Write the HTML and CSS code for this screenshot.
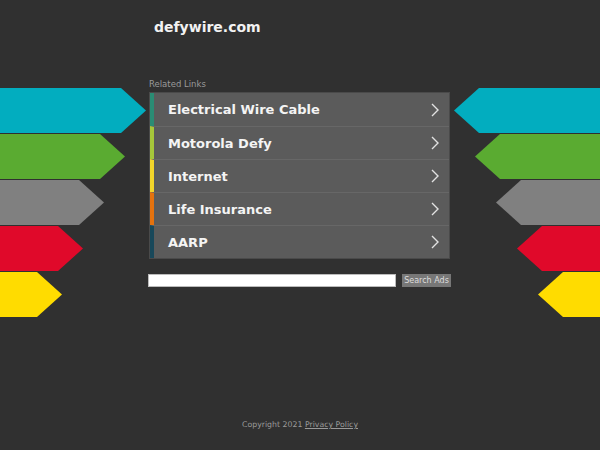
FILE: index.html
```html
<!DOCTYPE html>
<html lang="en">

<head>
    <meta charset="UTF-8">
    <meta name="viewport" content="width=device-width, initial-scale=1.0">
    <title>defywire.com</title>
    <link rel="stylesheet" href="styles.css">
</head>

<body>
    <div class="page">
        <div class="stage">
            <div class="arrows arrows-left">
                <div class="arrow cyan w1"></div>
                <div class="arrow green w2"></div>
                <div class="arrow gray w3"></div>
                <div class="arrow red w4"></div>
                <div class="arrow yellow w5"></div>
            </div>

            <div class="center">
                <h1 class="domain">defywire.com</h1>
                <p class="label">Related Links</p>
                <ul class="links">
                    <li class="bar-teal"><span>Electrical Wire Cable</span>
                        <svg class="chev" viewBox="0 0 8 14"><path d="M1 1 L7 7 L1 13" /></svg></li>
                    <li class="bar-lime"><span>Motorola Defy</span>
                        <svg class="chev" viewBox="0 0 8 14"><path d="M1 1 L7 7 L1 13" /></svg></li>
                    <li class="bar-yellow"><span>Internet</span>
                        <svg class="chev" viewBox="0 0 8 14"><path d="M1 1 L7 7 L1 13" /></svg></li>
                    <li class="bar-orange"><span>Life Insurance</span>
                        <svg class="chev" viewBox="0 0 8 14"><path d="M1 1 L7 7 L1 13" /></svg></li>
                    <li class="bar-navy"><span>AARP</span>
                        <svg class="chev" viewBox="0 0 8 14"><path d="M1 1 L7 7 L1 13" /></svg></li>
                </ul>
                <div class="searchBox">
                    <input type="text" id="searchInput">
                    <button id="searchBtn">Search Ads</button>
                </div>
            </div>

            <div class="arrows arrows-right">
                <div class="arrow cyan w1"></div>
                <div class="arrow green w2"></div>
                <div class="arrow gray w3"></div>
                <div class="arrow red w4"></div>
                <div class="arrow yellow w5"></div>
            </div>
        </div>

        <div class="footer">Copyright 2021 <a href="#">Privacy Policy</a></div>
    </div>
</body>

</html>
```

FILE: styles.css
```css
* {
    margin: 0;
    padding: 0;
    box-sizing: border-box;
}

body {
    background-color: #303030;
    font-family: "DejaVu Sans", sans-serif;
    color: #fff;
}

.page {
    height: 450px;
    display: flex;
    flex-direction: column;
}

.stage {
    display: grid;
    grid-template-columns: 148px 304px 148px;
}

/* side arrows */
.arrows {
    padding-top: 88px;
    display: flex;
    flex-direction: column;
    gap: 1px;
}

.arrows-right {
    align-items: flex-end;
}

.arrow {
    height: 45px;
}

.arrows-left .arrow {
    clip-path: polygon(0 0, calc(100% - 25px) 0, 100% 50%, calc(100% - 25px) 100%, 0 100%);
}

.arrows-right .arrow {
    clip-path: polygon(25px 0, 100% 0, 100% 100%, 25px 100%, 0 50%);
}

.w1 { width: 146px; }
.w2 { width: 125px; }
.w3 { width: 104px; }
.w4 { width: 83px; }
.w5 { width: 62px; }

.cyan { background-color: #02adbf; }
.green { background-color: #5aab31; }
.gray { background-color: #808080; }
.red { background-color: #e0092a; }
.yellow { background-color: #ffdc00; }

/* center column */
.domain {
    font-size: 14px;
    font-weight: bold;
    line-height: 20px;
    padding: 17px 0 0 6px;
    color: #f2f2f2;
}

.label {
    font-size: 8.5px;
    line-height: 12px;
    color: #9a9a9a;
    margin: 41px 0 2px 1px;
}

.links {
    list-style: none;
    margin-left: 1px;
    width: 301px;
    border: 1px solid #4a4a4a;
    background-color: #5b5b5b;
}

.links li {
    height: 33px;
    display: flex;
    align-items: center;
    justify-content: space-between;
    padding: 0 10px 0 14px;
    border-left: 4px solid;
    font-size: 13px;
    font-weight: bold;
    color: #f4f4f4;
}

.links li + li {
    border-top: 1px solid #676767;
}

.bar-teal { border-left-color: #2a8c74 !important; }
.bar-lime { border-left-color: #a6c73a !important; }
.bar-yellow { border-left-color: #f2d52a !important; }
.bar-orange { border-left-color: #e4720e !important; }
.bar-navy { border-left-color: #18485a !important; }

.chev {
    width: 8px;
    height: 14px;
    fill: none;
    stroke: #e2e2e2;
    stroke-width: 1.4;
}

.searchBox {
    display: flex;
    gap: 6px;
    margin-top: 15px;
}

#searchInput {
    width: 248px;
    height: 13px;
    border: 1px solid #bbb;
    background-color: #fff;
}

#searchBtn {
    width: 49px;
    height: 13px;
    border: none;
    background-color: #777;
    color: #ddd;
    font-family: "DejaVu Sans", sans-serif;
    font-size: 8px;
    line-height: 13px;
}

.footer {
    margin-top: auto;
    padding-bottom: 20px;
    text-align: center;
    font-size: 7.8px;
    line-height: 10px;
    color: #999;
}

.footer a {
    color: #999;
}
```
